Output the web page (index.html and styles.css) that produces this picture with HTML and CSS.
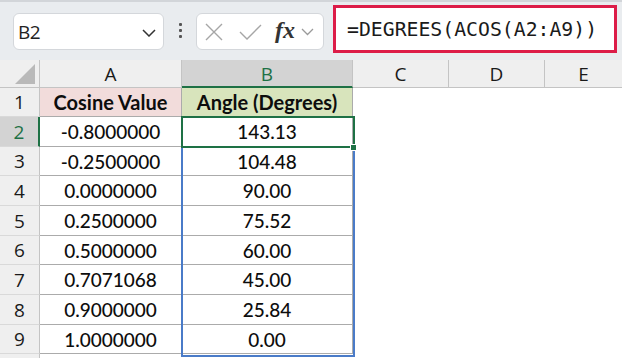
FILE: index.html
```html
<!DOCTYPE html>
<html>
<head>
<meta charset="utf-8">
<link rel="stylesheet" href="styles.css">
</head>
<body>
<div class="app">
  <div class="topbar">
    <div class="namebox">
      <span class="nb-text">B2</span>
      <svg class="nb-chev" width="14" height="8" viewBox="0 0 14 8"><path d="M1 1 L7 7 L13 1" fill="none" stroke="#333" stroke-width="1.5"/></svg>
    </div>
    <div class="dots"><i></i><i></i><i></i></div>
    <div class="fxbox">
      <svg class="ic-x" width="18" height="18" viewBox="0 0 18 18"><path d="M1 1 L17 17 M17 1 L1 17" stroke="#a6a6a6" stroke-width="1.4" fill="none"/></svg>
      <svg class="ic-check" width="23" height="16" viewBox="0 0 23 16"><path d="M1 8 L8 15 L22 1" stroke="#a6a6a6" stroke-width="1.4" fill="none"/></svg>
      <span class="fx">fx</span>
      <svg class="fx-chev" width="13" height="8" viewBox="0 0 13 8"><path d="M1 1 L6.5 6.5 L12 1" fill="none" stroke="#9a9a9a" stroke-width="1.3"/></svg>
    </div>
    <div class="formula">=DEGREES(ACOS(A2:A9))</div>
  </div>
  <div class="sheet">
    <div class="grid">
      <div class="corner"><span class="tri"></span></div>
      <div class="ch">A</div>
      <div class="ch sel">B</div>
      <div class="ch">C</div>
      <div class="ch">D</div>
      <div class="ch last">E</div>

      <div class="rh">1</div>
      <div class="c hdrA">Cosine Value</div>
      <div class="c hdrB">Angle (Degrees)</div>
      <div class="e"></div><div class="e"></div><div class="e"></div>

      <div class="rh sel">2</div>
      <div class="c">-0.8000000</div>
      <div class="c">143.13</div>
      <div class="e"></div><div class="e"></div><div class="e"></div>

      <div class="rh">3</div>
      <div class="c">-0.2500000</div>
      <div class="c">104.48</div>
      <div class="e"></div><div class="e"></div><div class="e"></div>

      <div class="rh">4</div>
      <div class="c">0.0000000</div>
      <div class="c">90.00</div>
      <div class="e"></div><div class="e"></div><div class="e"></div>

      <div class="rh">5</div>
      <div class="c">0.2500000</div>
      <div class="c">75.52</div>
      <div class="e"></div><div class="e"></div><div class="e"></div>

      <div class="rh">6</div>
      <div class="c">0.5000000</div>
      <div class="c">60.00</div>
      <div class="e"></div><div class="e"></div><div class="e"></div>

      <div class="rh">7</div>
      <div class="c">0.7071068</div>
      <div class="c">45.00</div>
      <div class="e"></div><div class="e"></div><div class="e"></div>

      <div class="rh">8</div>
      <div class="c">0.9000000</div>
      <div class="c">25.84</div>
      <div class="e"></div><div class="e"></div><div class="e"></div>

      <div class="rh">9</div>
      <div class="c">1.0000000</div>
      <div class="c">0.00</div>
      <div class="e"></div><div class="e"></div><div class="e"></div>

      <div class="rh"></div>
      <div class="e"></div><div class="e"></div><div class="e"></div><div class="e"></div><div class="e"></div>
    </div>
    <div class="spill"></div>
    <div class="active"></div>
    <div class="handle"></div>
  </div>
</div>
</body>
</html>
```

FILE: styles.css
```css
* { box-sizing: border-box; margin: 0; padding: 0; }
html, body { width: 622px; height: 358px; overflow: hidden; background: #fff; }
body { font-family: "Open Sans", "Noto Sans", sans-serif; }

.app { width: 622px; height: 358px; display: flex; flex-direction: column; }

.topbar {
  height: 60px;
  flex: none;
  background: #e9ecef;
  border-top: 2px solid #d2d5d9;
  display: flex;
  align-items: flex-start;
  position: relative;
}

.namebox {
  margin-left: 13px;
  margin-top: 11px;
  width: 151px;
  height: 37px;
  background: #fff;
  border: 1px solid #d4d7db;
  border-radius: 6px;
  display: flex;
  align-items: center;
  justify-content: space-between;
  padding: 0 7px 0 4px;
}
.nb-text { font-family: "Open Sans", sans-serif; font-size: 19px; color: #222; letter-spacing: -0.5px; }
.nb-chev { margin-top: 2px; }

.dots {
  margin-left: 15px;
  margin-top: 21px;
  width: 4px;
  display: flex;
  flex-direction: column;
  gap: 3px;
}
.dots i { display: block; width: 3px; height: 3px; background: #555; border-radius: 1px; }

.fxbox {
  margin-left: 13px;
  margin-top: 11px;
  width: 128px;
  height: 37px;
  background: #fff;
  border: 1px solid #d4d7db;
  border-radius: 6px;
  display: flex;
  align-items: center;
  padding-left: 8px;
}
.ic-check { margin-left: 16px; }
.fx {
  margin-left: 13px;
  font-family: "Liberation Serif", "DejaVu Serif", serif;
  font-style: italic;
  font-weight: 700;
  font-size: 24px;
  color: #333;
  line-height: 1;
  margin-top: -3px;
}
.fx-chev { margin-left: 6px; }

.formula {
  margin-left: 9px;
  margin-top: 3px;
  width: 284px;
  height: 48px;
  background: #fff;
  border: 3px solid #dc1c48;
  font-family: "DejaVu Sans Mono", "Liberation Mono", monospace;
  font-size: 19.8px;
  color: #1a1a1a;
  display: flex;
  align-items: center;
  padding-left: 11px;
}

.sheet { position: relative; flex: 1; overflow: hidden; }

.grid {
  display: grid;
  grid-template-columns: 40px 142px 171px 96px 96px 77px;
  grid-template-rows: 28px 29px 30px 29px 30px 30px 29px 30px 30px 29px 20px;
}

.corner {
  background: #efefef;
  border-right: 1px solid #c4c4c4;
  border-bottom: 1px solid #c4c4c4;
  position: relative;
}
.tri {
  position: absolute;
  right: 4px;
  bottom: 3px;
  width: 0; height: 0;
  border-left: 20px solid transparent;
  border-bottom: 20px solid #b9b9b9;
}

.ch {
  background: #efefef;
  border-right: 1px solid #c4c4c4;
  border-bottom: 1px solid #c4c4c4;
  display: flex;
  align-items: center;
  justify-content: center;
  font-family: "Open Sans", sans-serif;
  font-size: 19px;
  color: #1a1a1a;
  padding-top: 1px;
}
.ch.last { border-right: none; }
.ch.sel {
  background: #d3d3d3;
  color: #1e7145;
  border-bottom: 2px solid #1e7145;
}

.rh {
  background: #efefef;
  border-right: 1px solid #c4c4c4;
  border-bottom: 1px solid #d9d9d9;
  display: flex;
  align-items: center;
  justify-content: center;
  font-family: "Open Sans", sans-serif;
  font-size: 19px;
  color: #1a1a1a;
}
.rh.sel {
  background: #d3d3d3;
  color: #1e7145;
  border-right: 2px solid #1e7145;
}

.c {
  border-right: 1px solid #ababab;
  border-bottom: 1px solid #ababab;
  display: flex;
  align-items: center;
  justify-content: center;
  font-family: "Lato", "Liberation Sans", sans-serif;
  font-size: 19px;
  font-weight: 500;
  color: #0d0d0d;
}
.hdrA { background: #f2dcdb; font-weight: 700; font-size: 20px; }
.hdrB { background: #d8e4bc; font-weight: 700; font-size: 20px; }

.e { background: #fff; }

.spill {
  position: absolute;
  left: 181px;
  top: 56px;
  width: 174px;
  height: 241px;
  border: 2px solid #4a7bc8;
}
.active {
  position: absolute;
  left: 181px;
  top: 56px;
  width: 174px;
  height: 32px;
  border: 2px solid #1e7145;
}
.handle {
  position: absolute;
  left: 350px;
  top: 84px;
  width: 7px;
  height: 7px;
  background: #1e7145;
  border: 1px solid #fff;
}
```
